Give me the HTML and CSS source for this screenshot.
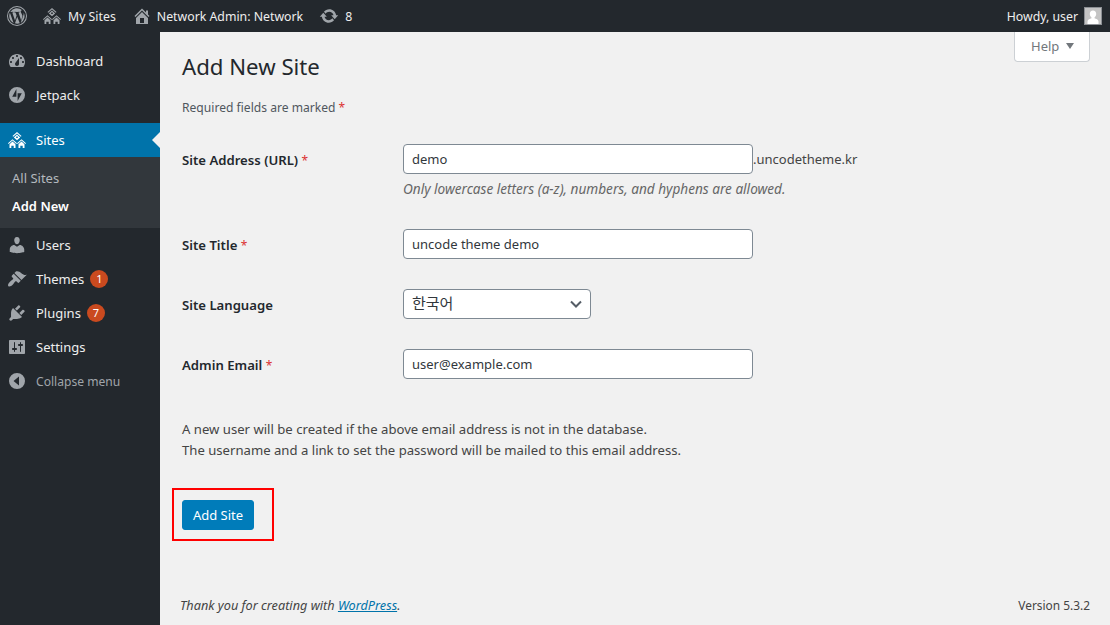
FILE: index.html
```html
<!DOCTYPE html>
<html lang="en">
<head>
<meta charset="UTF-8">
<title>Add New Site</title>
<link rel="stylesheet" href="styles.css">
</head>
<body>
<header class="adminbar">
	<div class="bar-left">
		<svg class="bar-logo" viewBox="0 0 20 20"><path fill-rule="evenodd" d="M10 0a10 10 0 1 0 0 20 10 10 0 0 0 0-20zm0 1a9 9 0 1 1 0 18 9 9 0 0 1 0-18zM2.200 10c0 3 1.800 5.700 4.400 7L2.900 6.800A7.800 7.800 0 0 0 2.200 10zm13-.4c0-1-.4-1.600-.7-2.200-.4-.6-.8-1.200-.8-1.800 0-.7.500-1.300 1.300-1.300h.1A7.800 7.800 0 0 0 3.300 5.900h.5l2.200-.1c.4 0 .5.600.1.600l-.8.100 2.700 8 1.600-4.900-1.100-3.100-.8-.1c-.4 0-.4-.6.100-.6l2.200.1 2.200-.1c.4 0 .5.600.1.600l-.8.100 2.700 7.900.7-2.500c.3-1 .6-1.700.6-2.300zm-5 1.100L8 17.300a7.800 7.800 0 0 0 4.800-.1l-.1-.1zm6.400-4.200.1.800c0 .8-.1 1.700-.6 2.800l-2.400 6.800a7.800 7.800 0 0 0 2.900-10.400z"/></svg>
		<a class="bar-item" href="#"><svg class="bar-icon" viewBox="0 0 20 20"><path fill-rule="evenodd" d="M10 2 5.500 6l.7.800L10 3.500l3.800 3.300.7-.8zM10 4.600 6.800 7.400 10 10.200l3.200-2.800zM9.200 6.500h1.600v1.600H9.200zM5.500 9.200 1 13.200l.7.700 3.800-3.400 3.800 3.400.7-.7zM5.500 11.500 2.500 14.200V18h1.800v-2.200h2.400V18h1.800v-3.800zM14.500 9.200 10 13.200l.7.7 3.800-3.400 3.800 3.400.7-.7zM14.500 11.500l-3 2.700V18h1.800v-2.200h2.400V18h1.800v-3.800z"/></svg>My Sites</a>
		<a class="bar-item" href="#"><svg class="bar-icon home-icon" viewBox="0 0 20 20"><path d="M16 8.500l1.530 1.530-1.060 1.060L10 4.620l-6.470 6.470-1.060-1.060L10 2.500l4 4v-2h2v4zm-6-2.460l6 5.990V18H4v-5.970zM12 17v-5H8v5h4z"/></svg>Network Admin: Network</a>
		<a class="bar-item" href="#"><svg class="bar-icon" viewBox="0 0 20 20"><path d="M10.200 3.280c3.530 0 6.430 2.610 6.920 6h2.080l-3.500 4-3.500-4h2.320c-.45-1.970-2.210-3.440-4.320-3.440-1.450 0-2.730.71-3.540 1.800L4.950 5.650c1.280-1.450 3.150-2.370 5.250-2.370zm-.4 13.440c-3.520 0-6.430-2.610-6.920-6H.8l3.500-4c1.170 1.330 2.330 2.670 3.500 4H5.480c.45 1.970 2.210 3.440 4.320 3.440 1.450 0 2.730-.71 3.540-1.800l1.710 1.950c-1.280 1.450-3.150 2.370-5.250 2.370z"/></svg>8</a>
	</div>
	<div class="bar-right">
		<span>Howdy, user</span>
		<svg class="avatar" viewBox="0 0 16 16"><rect width="16" height="16" fill="#c4c4c4"/><path fill="#fff" d="M8 2.500a3.200 3.200 0 0 1 3.200 3.500c0 1.500-.8 2.800-1.700 3.400v.8c1.500.5 4 1.400 4 3.200V16H2.500v-2.600c0-1.800 2.500-2.700 4-3.200v-.8C5.600 8.800 4.800 7.500 4.800 6A3.200 3.200 0 0 1 8 2.500z"/></svg>
	</div>
</header>

<div class="wrap">
	<nav class="sidebar">
		<ul class="menu">
			<li class="menu-item"><svg class="menu-icon" viewBox="0 0 20 20"><path fill-rule="evenodd" d="M3.760 16h12.480c1.100-1.370 1.760-3.110 1.760-5 0-4.420-3.580-8-8-8s-8 3.580-8 8c0 1.890.66 3.630 1.760 5zM10 4c.55 0 1 .45 1 1s-.45 1-1 1-1-.45-1-1 .45-1 1-1zM6 6c.55 0 1 .45 1 1s-.45 1-1 1-1-.45-1-1 .45-1 1-1zm8 0c.55 0 1 .45 1 1s-.45 1-1 1-1-.45-1-1 .45-1 1-1zm-5.370 5.550L12 7v6c0 1.100-.9 2-2 2s-2-.9-2-2c0-.57.25-1.120.63-1.450zM4 10c.55 0 1 .45 1 1s-.45 1-1 1-1-.45-1-1 .45-1 1-1zm12 0c.55 0 1 .45 1 1s-.45 1-1 1-1-.45-1-1 .45-1 1-1z"/></svg>Dashboard</li>
			<li class="menu-item"><svg class="menu-icon" viewBox="0 0 20 20"><path fill-rule="evenodd" d="M10 2a8 8 0 1 0 0 16 8 8 0 0 0 0-16zM9.400 4v7.800H5.200zm1.200 12V8.200h4.200z"/></svg>Jetpack</li>
			<li class="menu-item is-current"><svg class="menu-icon" viewBox="0 0 20 20"><path fill-rule="evenodd" d="M10 2 5.500 6l.7.800L10 3.500l3.800 3.300.7-.8zM10 4.600 6.800 7.400 10 10.200l3.200-2.800zM9.200 6.500h1.600v1.600H9.200zM5.500 9.200 1 13.200l.7.700 3.800-3.400 3.800 3.400.7-.7zM5.500 11.500 2.500 14.200V18h1.800v-2.200h2.400V18h1.800v-3.800zM14.500 9.200 10 13.200l.7.7 3.800-3.400 3.800 3.400.7-.7zM14.500 11.500l-3 2.700V18h1.800v-2.200h2.400V18h1.800v-3.800z"/></svg>Sites</li>
			<li class="submenu">
				<a href="#">All Sites</a>
				<a class="is-active" href="#">Add New</a>
			</li>
			<li class="menu-item"><svg class="menu-icon" viewBox="0 0 20 20"><path d="M10 9.250c-2.270 0-2.730-3.440-2.730-3.440C7 4.020 7.820 2 9.970 2c2.160 0 2.980 2.020 2.710 3.810 0 0-.41 3.440-2.680 3.440zm0 2.570L12.720 10c2.390 0 4.520 2.330 4.520 4.530v2.490s-3.650 1.130-7.240 1.130c-3.650 0-7.240-1.130-7.240-1.130v-2.490c0-2.250 1.940-4.480 4.470-4.480z"/></svg>Users</li>
			<li class="menu-item"><svg class="menu-icon" viewBox="0 0 20 20"><path d="M14.480 11.060 7.410 3.990l1.500-1.500c.5-.56 2.300-.47 3.510.32 1.210.8 1.430 1.280 2.910 2.100 1.180.64 2.450 1.260 4.450.85zm-.71.71L6.700 4.700 4.930 6.470c-.39.39-.39 1.020 0 1.410l1.060 1.060c.39.39.39 1.030 0 1.420-.6.6-1.430 1.110-2.210 1.690-.35.26-.7.530-1.010.84-1.340 1.340-2.360 3.260-1.370 4.250.99.99 2.920-.03 4.260-1.360.31-.31.58-.66.85-1.010.58-.78 1.090-1.610 1.690-2.210.39-.39 1.020-.39 1.410 0l1.060 1.060c.39.39 1.020.39 1.410 0z"/></svg>Themes<span class="count">1</span></li>
			<li class="menu-item"><svg class="menu-icon" viewBox="0 0 20 20"><path d="M13.110 4.360 9.870 7.600 8 5.730l3.240-3.240c.35-.34 1.050-.2 1.560.32.52.51.66 1.210.31 1.550zm-8 1.770.91-1.120 9.010 9.010-1.190.84c-.71.71-2.630 1.160-3.820 1.160H6.140L4.900 17.260c-.59.59-1.540.59-2.120 0-.59-.58-.59-1.530 0-2.120l1.240-1.240v-3.880c0-1.130.4-3.190 1.090-3.890zm7.260 3.970 3.240-3.240c.34-.35 1.040-.21 1.550.31.52.51.66 1.210.31 1.550l-3.240 3.250z"/></svg>Plugins<span class="count">7</span></li>
			<li class="menu-item"><svg class="menu-icon" viewBox="0 0 20 20"><path fill-rule="evenodd" d="M18 16V4c0-.55-.45-1-1-1H3c-.55 0-1 .45-1 1v12c0 .55.45 1 1 1h14c.55 0 1-.45 1-1zM8 11h1c.55 0 1 .45 1 1s-.45 1-1 1H8v1.500c0 .28-.22.5-.5.5s-.5-.22-.5-.5V13H6c-.55 0-1-.45-1-1s.45-1 1-1h1V5.500c0-.28.22-.5.5-.5s.5.22.5.5V11zm5-2h-1c-.55 0-1-.45-1-1s.45-1 1-1h1V5.500c0-.28.22-.5.5-.5s.5.22.5.5V7h1c.55 0 1 .45 1 1s-.45 1-1 1h-1v5.500c0 .28-.22.5-.5.5s-.5-.22-.5-.5V9z"/></svg>Settings</li>
			<li class="menu-item is-collapse"><svg class="menu-icon" viewBox="0 0 20 20"><path fill-rule="evenodd" d="M10 2a8 8 0 1 1 0 16 8 8 0 0 1 0-16zm2 3.500L6.500 10l5.500 4.500z"/></svg>Collapse menu</li>
		</ul>
	</nav>

	<main class="content">
		<a class="help-tab" href="#">Help<span class="help-arrow"></span></a>
		<h1>Add New Site</h1>
		<p class="required-note">Required fields are marked <span class="req">*</span></p>

		<form class="site-form">
			<div class="form-row">
				<label>Site Address (URL) <span class="req">*</span></label>
				<div class="field">
					<div class="address">
						<input class="text-input" type="text" value="demo"><span>.uncodetheme.kr</span>
					</div>
					<p class="hint">Only lowercase letters (a-z), numbers, and hyphens are allowed.</p>
				</div>
			</div>
			<div class="form-row">
				<label>Site Title <span class="req">*</span></label>
				<div class="field"><input class="text-input" type="text" value="uncode theme demo"></div>
			</div>
			<div class="form-row">
				<label>Site Language</label>
				<div class="field">
					<div class="select-box">
						<span>한국어</span>
						<svg class="select-arrow" viewBox="0 0 12 8"><path d="M1 1.500 6 6.500l5-5" fill="none" stroke="#555d66" stroke-width="2"/></svg>
					</div>
				</div>
			</div>
			<div class="form-row">
				<label>Admin Email <span class="req">*</span></label>
				<div class="field"><input class="text-input" type="text" value="user@example.com"></div>
			</div>
		</form>

		<p class="notice">A new user will be created if the above email address is not in the database.<br>The username and a link to set the password will be mailed to this email address.</p>

		<div class="highlight"><button class="primary" type="button">Add Site</button></div>

		<footer class="page-footer">
			<span class="thanks">Thank you for creating with <a href="#">WordPress</a>.</span>
			<span class="version">Version 5.3.2</span>
		</footer>
	</main>
</div>
</body>
</html>
```

FILE: styles.css
```css
* {
	box-sizing: border-box;
}

html, body {
	margin: 0;
	height: 625px;
	overflow: hidden;
}

body {
	background-color: #f1f1f1;
	color: #444;
	font-family: "Noto Sans", "Noto Sans CJK KR", sans-serif;
	font-size: 13px;
}

a {
	color: inherit;
	text-decoration: none;
}

/* top bar */
.adminbar {
	display: flex;
	justify-content: space-between;
	align-items: center;
	height: 32px;
	background-color: #23282d;
	color: #eee;
	font-size: 12.3px;
	padding: 0 8px 0 7px;
}

.bar-left, .bar-right, .bar-item {
	display: flex;
	align-items: center;
}

.bar-logo {
	width: 20px;
	height: 20px;
	fill: #a0a5aa;
	margin-right: 15px;
}

.bar-item {
	margin-right: 16px;
}

.bar-icon {
	width: 20px;
	height: 20px;
	fill: #a0a5aa;
	margin-right: 6px;
}

.home-icon {
	margin-right: 5px;
}

.bar-right {
	gap: 6px;
}

.avatar {
	width: 18px;
	height: 18px;
	border: 1px solid #8c8f94;
}

/* layout */
.wrap {
	display: grid;
	grid-template-columns: 160px 1fr;
	height: 593px;
}

.sidebar {
	background-color: #23282d;
	padding-top: 12px;
}

.menu {
	list-style: none;
	margin: 0;
	padding: 0;
}

.menu-item {
	display: flex;
	align-items: center;
	height: 34px;
	color: #eee;
	padding-left: 7px;
	position: relative;
}

.menu-icon {
	width: 20px;
	height: 20px;
	fill: #a0a5aa;
	margin-right: 9px;
}

.is-current {
	background-color: #0073aa;
	color: #fff;
	margin-top: 11px;
}

.is-current .menu-icon {
	fill: #fff;
}

.is-current::after {
	content: "";
	position: absolute;
	right: 0;
	top: 9px;
	border: 8px solid transparent;
	border-right-color: #f1f1f1;
}

.submenu {
	display: flex;
	flex-direction: column;
	height: 71px;
	background-color: #32373c;
	padding: 7px 0 0 12px;
}

.submenu a {
	color: #b4b9be;
	line-height: 28px;
}

.submenu .is-active {
	color: #fff;
	font-weight: 600;
}

.count {
	display: inline-block;
	width: 18px;
	height: 18px;
	margin-left: 6px;
	border-radius: 50%;
	background-color: #ca4a1f;
	color: #fff;
	font-size: 11px;
	line-height: 18px;
	text-align: center;
}

.is-collapse {
	color: #a0a5aa;
	font-size: 12.1px;
}

/* content */
.content {
	display: flex;
	flex-direction: column;
	align-items: flex-start;
	position: relative;
	padding: 0 20px 0 22px;
}

.help-tab {
	position: absolute;
	top: 0;
	right: 20px;
	width: 76px;
	height: 30px;
	background-color: #fff;
	border: 1px solid #ccd0d4;
	border-top: 0;
	border-radius: 0 0 4px 4px;
	color: #72777c;
	line-height: 28px;
	padding-left: 16px;
}

.help-arrow {
	display: inline-block;
	margin-left: 7px;
	border: 4px solid transparent;
	border-top: 6px solid #72777c;
	border-bottom: 0;
	vertical-align: 2px;
}

h1 {
	font-size: 22.2px;
	font-weight: 400;
	line-height: 30px;
	color: #23282d;
	margin: 20px 0 0;
}

.required-note {
	margin: 17px 0 0;
	font-size: 12.1px;
	line-height: 18px;
	color: #50575e;
}

.req {
	color: #dc3232;
	font-size: 12px;
	font-weight: 400;
}

.site-form {
	display: flex;
	flex-direction: column;
	margin-top: 27px;
}

.form-row {
	display: flex;
	align-items: flex-start;
	margin-bottom: 30px;
}

.form-row label {
	width: 221px;
	height: 30px;
	font-weight: 600;
	color: #23282d;
	line-height: 32px;
	font-size: 13.15px;
}

.text-input {
	display: block;
	width: 350px;
	height: 30px;
	padding: 0 8px;
	border: 1px solid #7e8993;
	border-radius: 4px;
	background-color: #fff;
	color: #32373c;
	font-family: inherit;
	font-size: 13px;
}

.address {
	display: flex;
	align-items: center;
}

.hint {
	margin: 6px 0 0;
	color: #666;
	font-size: 13.6px;
	font-style: italic;
	line-height: 18px;
	height: 19px;
}

.select-box {
	display: flex;
	justify-content: space-between;
	align-items: center;
	width: 188px;
	height: 30px;
	padding: 0 8px;
	border: 1px solid #7e8993;
	border-radius: 4px;
	background-color: #fff;
	color: #32373c;
	font-size: 15px;
}

.select-box span {
	padding-bottom: 3px;
}

.select-arrow {
	width: 12px;
	height: 8px;
}

.notice {
	margin: 10px 0 0;
	line-height: 21px;
	font-size: 13.13px;
}

.highlight {
	display: flex;
	margin: 27px 0 0 -10px;
	padding: 10px 18px 9px 8px;
	border: 2px solid #f00;
}

.primary {
	width: 72px;
	height: 30px;
	padding: 0;
	border: 1px solid #007cba;
	border-radius: 3px;
	background-color: #007cba;
	color: #fff;
	font-family: inherit;
	font-size: 13px;
}

.page-footer {
	display: flex;
	justify-content: space-between;
	width: calc(100% + 2px);
	margin: auto 0 0 -2px;
	padding: 0 0 11px;
	line-height: 18px;
}

.thanks {
	font-size: 12.7px;
	font-style: italic;
}

.thanks a {
	color: #0073aa;
	text-decoration: underline;
}

.version {
	font-size: 11.9px;
}
```
